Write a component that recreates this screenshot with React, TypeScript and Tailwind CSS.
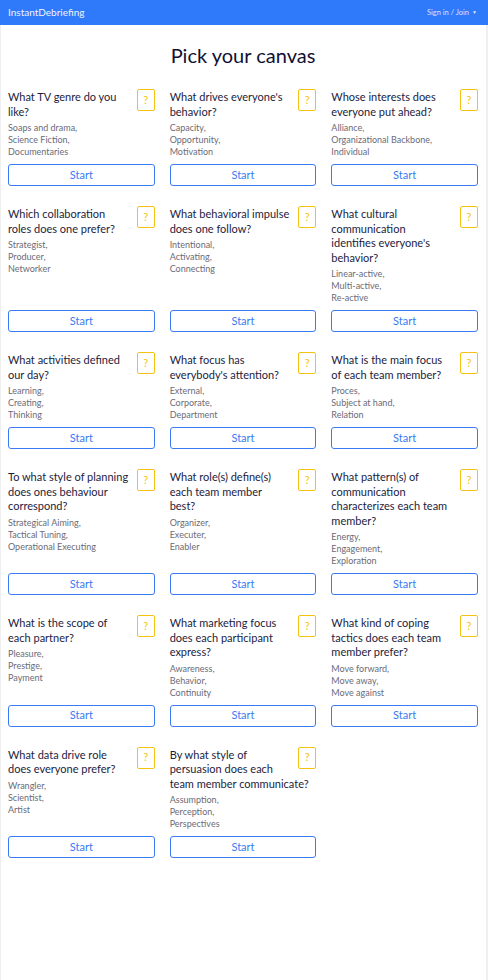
import React from 'react';

type Canvas = {
  lines: string[];
  options: string[];
};

// question lines are broken the same way the original page wraps them
const canvases: Canvas[] = [
  { lines: ['What TV genre do you', 'like?'], options: ['Soaps and drama', 'Science Fiction', 'Documentaries'] },
  { lines: ["What drives everyone's", 'behavior?'], options: ['Capacity', 'Opportunity', 'Motivation'] },
  { lines: ['Whose interests does', 'everyone put ahead?'], options: ['Alliance', 'Organizational Backbone', 'Individual'] },
  { lines: ['Which collaboration', 'roles does one prefer?'], options: ['Strategist', 'Producer', 'Networker'] },
  { lines: ['What behavioral impulse', 'does one follow?'], options: ['Intentional', 'Activating', 'Connecting'] },
  { lines: ['What cultural', 'communication', "identifies everyone's", 'behavior?'], options: ['Linear-active', 'Multi-active', 'Re-active'] },
  { lines: ['What activities defined', 'our day?'], options: ['Learning', 'Creating', 'Thinking'] },
  { lines: ['What focus has', "everybody's attention?"], options: ['External', 'Corporate', 'Department'] },
  { lines: ['What is the main focus', 'of each team member?'], options: ['Proces', 'Subject at hand', 'Relation'] },
  { lines: ['To what style of planning', 'does ones behaviour', 'correspond?'], options: ['Strategical Aiming', 'Tactical Tuning', 'Operational Executing'] },
  { lines: ['What role(s) define(s)', 'each team member', 'best?'], options: ['Organizer', 'Executer', 'Enabler'] },
  { lines: ['What pattern(s) of', 'communication', 'characterizes each team', 'member?'], options: ['Energy', 'Engagement', 'Exploration'] },
  { lines: ['What is the scope of', 'each partner?'], options: ['Pleasure', 'Prestige', 'Payment'] },
  { lines: ['What marketing focus', 'does each participant', 'express?'], options: ['Awareness', 'Behavior', 'Continuity'] },
  { lines: ['What kind of coping', 'tactics does each team', 'member prefer?'], options: ['Move forward', 'Move away', 'Move against'] },
  { lines: ['What data drive role', 'does everyone prefer?'], options: ['Wrangler', 'Scientist', 'Artist'] },
  { lines: ['By what style of', 'persuasion does each', 'team member communicate?'], options: ['Assumption', 'Perception', 'Perspectives'] },
];

const CanvasCard: React.FC<{ canvas: Canvas }> = ({ canvas }) => (
  <div className="relative flex flex-col">
    <span className="absolute right-0 top-0 flex h-[22px] w-[18px] items-center justify-center rounded-[2px] border border-[#f5c211] text-[11px] text-[#f5c211]">
      ?
    </span>
    <h3 className="mt-[1px] text-[11px] leading-[14.5px] text-[#1c1c40]">
      {canvas.lines.map((l) => (
        <span key={l} className="block whitespace-nowrap">
          {l}
        </span>
      ))}
    </h3>
    <p className="mt-[3px] pb-[6px] text-[9px] leading-[12px] text-[#6b6b78]">
      {canvas.options.map((o, i) => (
        <span key={o} className="block">
          {o}
          {i < canvas.options.length - 1 ? ',' : ''}
        </span>
      ))}
    </p>
    <button className="mt-auto h-[22px] w-full rounded-[3px] border border-[#3a7af4] bg-white text-[11px] text-[#3a7af4]">
      Start
    </button>
  </div>
);

export default function App() {
  return (
    <div className="min-h-[980px] bg-[#efefef] font-['Lato',sans-serif]">
      {/* Navbar */}
      <nav className="flex h-[25px] items-center justify-between bg-[#2f7afa] pl-[8px] pr-[11px]">
        <span className="text-[10px] text-[#eef3ff]">InstantDebriefing</span>
        <span className="flex items-center gap-[3px] text-[7.5px] text-[#d6e2ff]">
          Sign in / Join <span className="text-[5px]">▼</span>
        </span>
      </nav>

      <main className="ml-[1px] mr-[2px] min-h-[955px] bg-white pl-[7px] pr-[8px] pb-10">
        <h1 className="pt-[17px] pb-[21px] text-center text-[20px] leading-[26px] text-[#111133]">
          Pick your canvas
        </h1>

        <div className="grid grid-cols-3 gap-x-[15px] gap-y-[20px]">
          {canvases.map((c) => (
            <CanvasCard key={c.lines.join(' ')} canvas={c} />
          ))}
        </div>
      </main>
    </div>
  );
}
